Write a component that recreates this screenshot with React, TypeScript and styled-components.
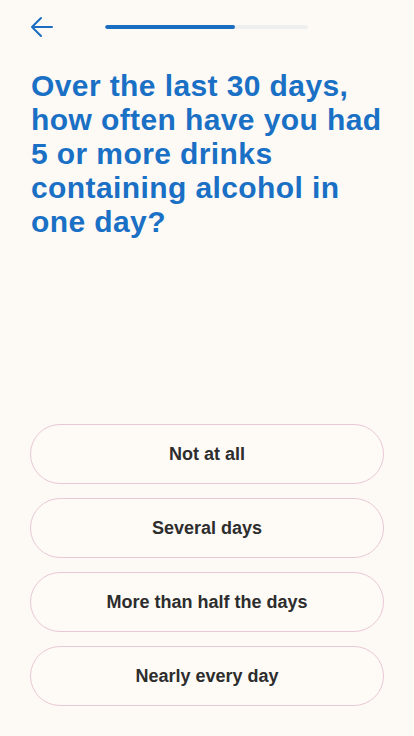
import styled, { createGlobalStyle } from "styled-components";

const GlobalStyle = createGlobalStyle`
  html, body {
    margin: 0;
    padding: 0;
    background: #fdfaf6;
  }
  * {
    box-sizing: border-box;
  }
`;

const Screen = styled.div`
  width: 414px;
  height: 736px;
  background: #fdfaf6;
  display: flex;
  flex-direction: column;
  padding: 0 30px 30px 30px;
  font-family: "Liberation Sans", Arial, sans-serif;
`;

const TopBar = styled.div`
  height: 54px;
  display: flex;
  align-items: center;
  gap: 51px;
`;

const BackButton = styled.button`
  width: 24px;
  height: 24px;
  padding: 0;
  border: none;
  background: none;
  display: flex;
  align-items: center;
  justify-content: center;
  cursor: pointer;
`;

const ProgressTrack = styled.div`
  width: 203px;
  height: 4px;
  background: #efefef;
  border-radius: 2px;
  overflow: hidden;
`;

const ProgressFill = styled.div`
  height: 100%;
  background: #1a6dc1;
  border-radius: 2px;
`;

const Question = styled.h1`
  margin: 15px 0 0 1px;
  font-size: 30px;
  line-height: 34px;
  font-weight: 700;
  color: #1a70c4;
  letter-spacing: 0.4px;
`;

const Options = styled.div`
  margin-top: auto;
  display: flex;
  flex-direction: column;
  gap: 14px;
`;

const Option = styled.button`
  width: 100%;
  height: 60px;
  border: 1px solid #e8c9d6;
  border-radius: 30px;
  background: #fefbf7;
  font-family: "Liberation Sans", Arial, sans-serif;
  font-size: 18px;
  font-weight: 700;
  color: #2d2d2d;
  cursor: pointer;
`;

const answers = [
  "Not at all",
  "Several days",
  "More than half the days",
  "Nearly every day",
];

export default function App() {
  const progress = 64;
  return (
    <>
      <GlobalStyle />
      <Screen>
        <TopBar>
          <BackButton aria-label="Back">
            <svg width="24" height="24" viewBox="0 0 24 24" fill="none">
              <path
                d="M22 12H2M11 3L2 12L11 21"
                stroke="#1a6dc1"
                strokeWidth="2"
                strokeLinecap="round"
                strokeLinejoin="round"
              />
            </svg>
          </BackButton>
          <ProgressTrack>
            <ProgressFill style={{ width: `${progress}%` }} />
          </ProgressTrack>
        </TopBar>
        <Question>
          Over the last 30 days, how often have you had 5 or more drinks
          containing alcohol in one day?
        </Question>
        <Options>
          {answers.map((a) => (
            <Option key={a}>{a}</Option>
          ))}
        </Options>
      </Screen>
    </>
  );
}
